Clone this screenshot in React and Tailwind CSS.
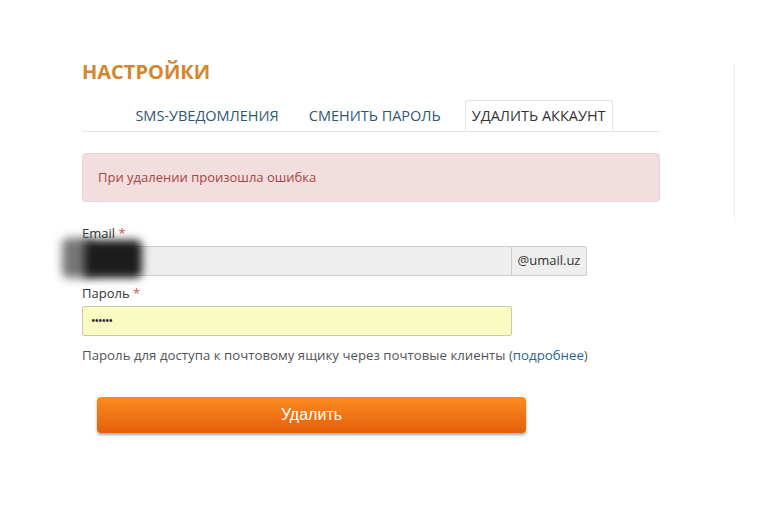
import { useState } from 'react'

const TABS = ['SMS-уведомления', 'Сменить пароль', 'Удалить аккаунт']

export default function App() {
  const [active] = useState(2)

  return (
    <div className="relative w-[768px] h-[512px] bg-white overflow-hidden" style={{ fontFamily: '"Open Sans", "Noto Sans", sans-serif' }}>
      <div className="absolute left-[734px] top-[64px] w-px h-[158px] bg-[#f2f2f2]" />

      <div className="w-[578px] ml-[82px] pt-[58px]">
        <h1 className="text-[20px] leading-[28px] font-bold text-[#d4862e] uppercase">Настройки</h1>

        <div className="mt-[14px] flex justify-center gap-[18px] border-b border-[#e2e2e2]">
          {TABS.map((t, i) => (
            <div
              key={t}
              className={
                i === active
                  ? 'px-[6px] h-[31px] -mb-px flex items-center text-[14.5px] uppercase text-[#333] bg-white border border-[#e2e2e2] border-b-white rounded-t-[3px]'
                  : 'px-[6px] h-[31px] flex items-center text-[14.5px] uppercase text-[#2f5670]'
              }
            >
              {t}
            </div>
          ))}
        </div>

        <div className="mt-[21px] h-[49px] px-[15px] flex items-center bg-[#f2dede] border border-[#ebd3d6] rounded-[4px] text-[13px] text-[#a94442]">
          При удалении произошла ошибка
        </div>

        <div className="mt-[22px] text-[13px] leading-[18px] text-[#333]">
          Email <span className="text-[#d9534f]">*</span>
        </div>
        <div className="relative mt-[4px] flex w-[505px] h-[30px]">
          <div className="flex-1 bg-[#eeeeee] border border-[#cccccc] rounded-l-[2px]" />
          <div className="w-[75px] flex items-center justify-center bg-[#eeeeee] border border-l-0 border-[#cccccc] rounded-r-[2px] text-[13px] text-[#333]">
            @umail.uz
          </div>
          <div className="absolute left-[-20px] top-[-8px] w-[30px] h-[40px] rounded-[6px] bg-[#777] blur-[5px]" />
          <div className="absolute left-[2px] top-[-6px] w-[58px] h-[38px] rounded-[6px] bg-[#1c1c1c] blur-[4px]" />
        </div>

        <div className="mt-[8px] text-[13px] leading-[18px] text-[#333]">
          Пароль <span className="text-[#d9534f]">*</span>
        </div>
        <div className="mt-[4px] w-[430px] h-[30px] px-[8px] flex items-center bg-[#fafbc3] border border-[#c9cba8] rounded-[2px] text-[12px] tracking-[-1px] text-[#222]">
          ••••••
        </div>

        <p className="mt-[10px] text-[13.25px] leading-[18px] text-[#555]">
          Пароль для доступа к почтовому ящику через почтовые клиенты (<span className="text-[#2a6496]">подробнее</span>)
        </p>

        <button
          className="mt-[33px] ml-[15px] w-[429px] h-[36px] rounded-[4px] bg-gradient-to-b from-[#fb8c1f] to-[#e45e0a] text-white text-[16px] shadow-[0_2px_3px_rgba(0,0,0,0.35)]"
          style={{ fontFamily: '"Liberation Sans", Arial, sans-serif' }}
        >
          Удалить
        </button>
      </div>
    </div>
  )
}
